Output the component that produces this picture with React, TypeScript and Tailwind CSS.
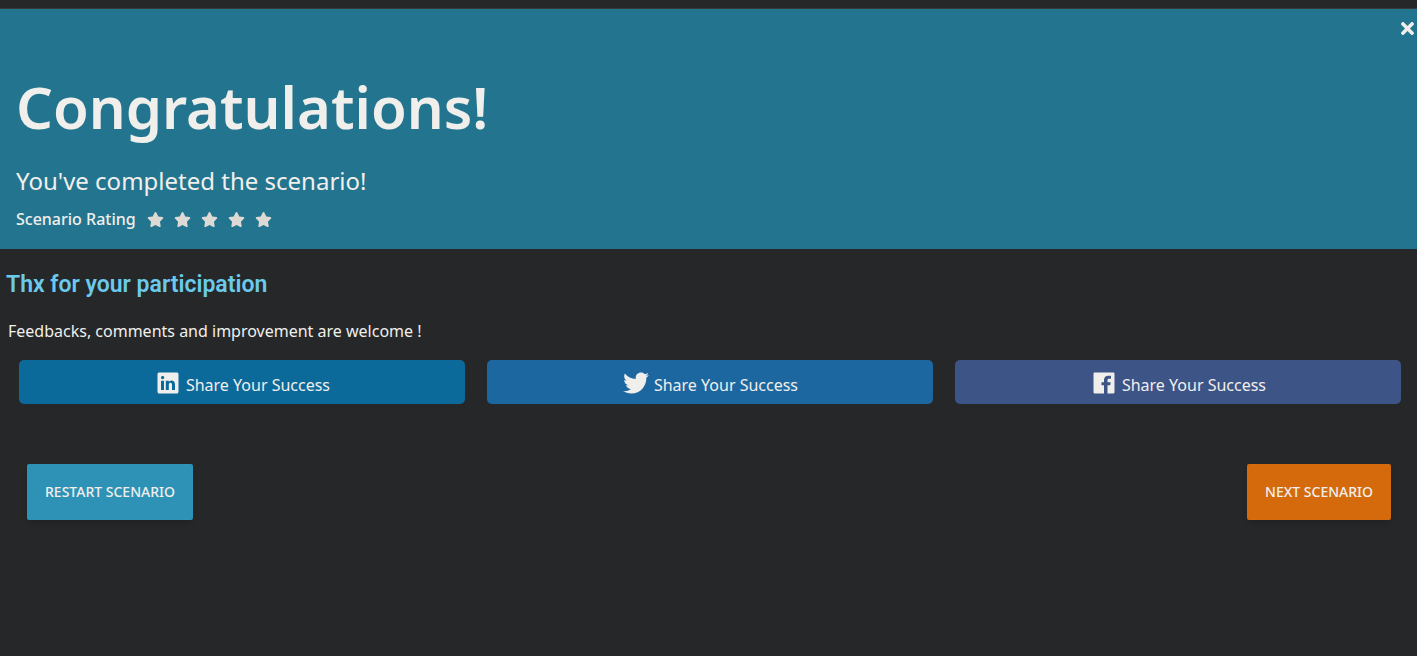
import type { ReactNode } from "react";
import { FaTimes } from "react-icons/fa";
import { FaStar } from "react-icons/fa6";
import { IoLogoFacebook, IoLogoLinkedin, IoLogoTwitter } from "react-icons/io";

type ShareProps = { color: string; icon: ReactNode };

function ShareButton({ color, icon }: ShareProps) {
  return (
    <button type="button" className={`flex h-11 items-center justify-center gap-1 rounded-[5px] pt-[2px] ${color}`}>
      {icon}
      <span className="pt-1 font-['Noto_Sans',sans-serif] text-base">Share Your Success</span>
    </button>
  );
}

export default function App() {
  return (
    <div className="min-h-screen bg-[#252729] font-['Noto_Sans',sans-serif] text-[#f1efec]">
      <div className="h-2 border-b border-[#3a3a3c] box-content" />
      <header className="flex h-60 items-start justify-between bg-[#23758f]">
        <div className="px-4 pt-15">
          <h1 className="text-[58px] leading-[76px] font-semibold">Congratulations!</h1>
          <p className="pt-5 text-2xl leading-8">You've completed the scenario!</p>
          <div className="flex items-center gap-[11px] pt-[10px]">
            <span className="text-base leading-6 font-medium">Scenario Rating</span>
            <div className="flex gap-[10px] text-[#dddad5]">
              {[1, 2, 3, 4, 5].map((n) => (
                <button key={n} type="button" aria-label={`Rate ${n}`}>
                  <FaStar size={17} />
                </button>
              ))}
            </div>
          </div>
        </div>
        <button type="button" aria-label="Close" className="pt-[10px]">
          <FaTimes size={19} />
        </button>
      </header>
      <main>
        <h2 className="px-[6px] pt-5 font-[Roboto,sans-serif] text-[23px] leading-8 font-semibold text-[#6bcaeb]">
          Thx for your participation
        </h2>
        <p className="px-2 pt-[18px] text-base leading-6">Feedbacks, comments and improvement are welcome !</p>
        <div className="grid grid-cols-3 gap-[22px] pt-[17px] pr-4 pl-[19px]">
          <ShareButton color="bg-[#0c6a9b]" icon={<IoLogoLinkedin size={28} />} />
          <ShareButton color="bg-[#1c67a0]" icon={<IoLogoTwitter size={28} />} />
          <ShareButton color="bg-[#3d5487]" icon={<IoLogoFacebook size={28} />} />
        </div>
        <div className="flex justify-between pt-15 pr-[26px] pl-[27px] text-sm font-medium">
          <button type="button" className="h-14 rounded-xs bg-[#2e92b7] px-[18px] shadow-md">
            RESTART SCENARIO
          </button>
          <button type="button" className="h-14 rounded-xs bg-[#d46a0c] px-[18px] shadow-md">
            NEXT SCENARIO
          </button>
        </div>
      </main>
    </div>
  );
}
